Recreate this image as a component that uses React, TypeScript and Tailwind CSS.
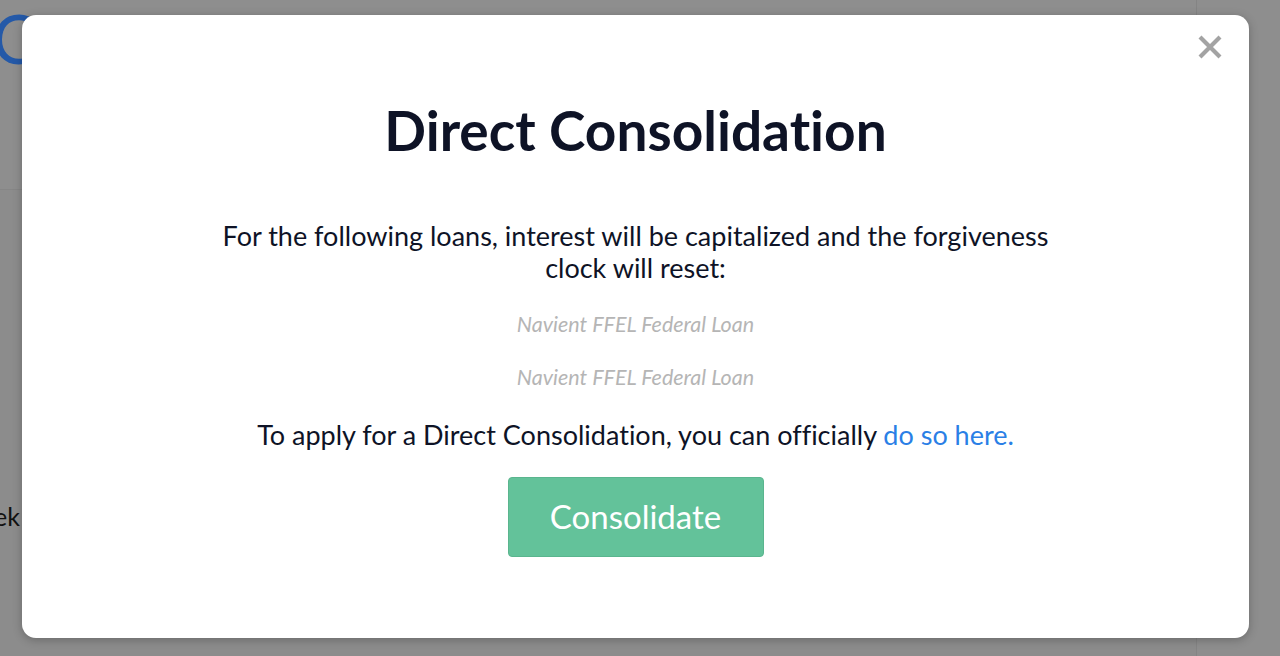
const lato = { fontFamily: "Lato, 'Open Sans', sans-serif" };

function PageBehind() {
  // the dashboard under the overlay, dimmed
  return (
    <div className="flex h-full w-full bg-[#8c8c8c]">
      <div className="flex flex-1 flex-col">
        <div className="h-[190px] border-b border-[#868686] bg-[#8e8e8e] pt-[4px]">
          <span className="-ml-[8px] text-[68px] font-normal leading-none text-[#2459a8]">C</span>
        </div>
        <div className="pt-[308px]">
          <span className="-ml-[6px] text-[25px] text-[#111]">ek</span>
        </div>
      </div>
      <div className="w-[84px] border-l border-[#848484] bg-[#8e8e8e]" />
    </div>
  );
}

function CloseIcon() {
  return (
    <svg width="24" height="24" viewBox="0 0 24 24" fill="none" stroke="currentColor" strokeWidth="4.2">
      <path d="M2 2 L22 22 M22 2 L2 22" />
    </svg>
  );
}

export default function App() {
  return (
    <div className="relative h-[656px] w-[1280px] overflow-hidden [font-variant-ligatures:none]" style={lato}>
      <PageBehind />
      <div className="absolute left-[22px] top-[15px] flex h-[623px] w-[1227px] flex-col items-center rounded-[14px] bg-white shadow-[0_2px_10px_rgba(0,0,0,0.25)]">
        <button className="absolute right-[27px] top-[20px] text-[#a3a3a3]" aria-label="Close">
          <CloseIcon />
        </button>
        <h1 className="mt-[82px] text-[55px] font-bold leading-[1.2] text-[#0e1326]">Direct Consolidation</h1>
        <p className="mt-[57px] w-[860px] text-center text-[27px] leading-[32px] text-[#0e1326]">
          For the following loans, interest will be capitalized and the forgiveness clock will reset:
        </p>
        <div className="mt-[27px] flex flex-col items-center gap-[26px]">
          <p className="text-[21.5px] italic leading-[27px] text-[#b5b5b5]">Navient FFEL Federal Loan</p>
          <p className="text-[21.5px] italic leading-[27px] text-[#b5b5b5]">Navient FFEL Federal Loan</p>
        </div>
        <p className="mt-[28px] text-[27px] leading-[32px] text-[#0e1326]">
          To apply for a Direct Consolidation, you can officially{" "}
          <a className="text-[#2a7fe6]" href="#">do so here.</a>
        </p>
        <button className="mt-[26px] h-[80px] w-[256px] rounded-[4px] border border-[#5ab58e] bg-[#63c29a] text-[33px] text-white">
          Consolidate
        </button>
      </div>
    </div>
  );
}
